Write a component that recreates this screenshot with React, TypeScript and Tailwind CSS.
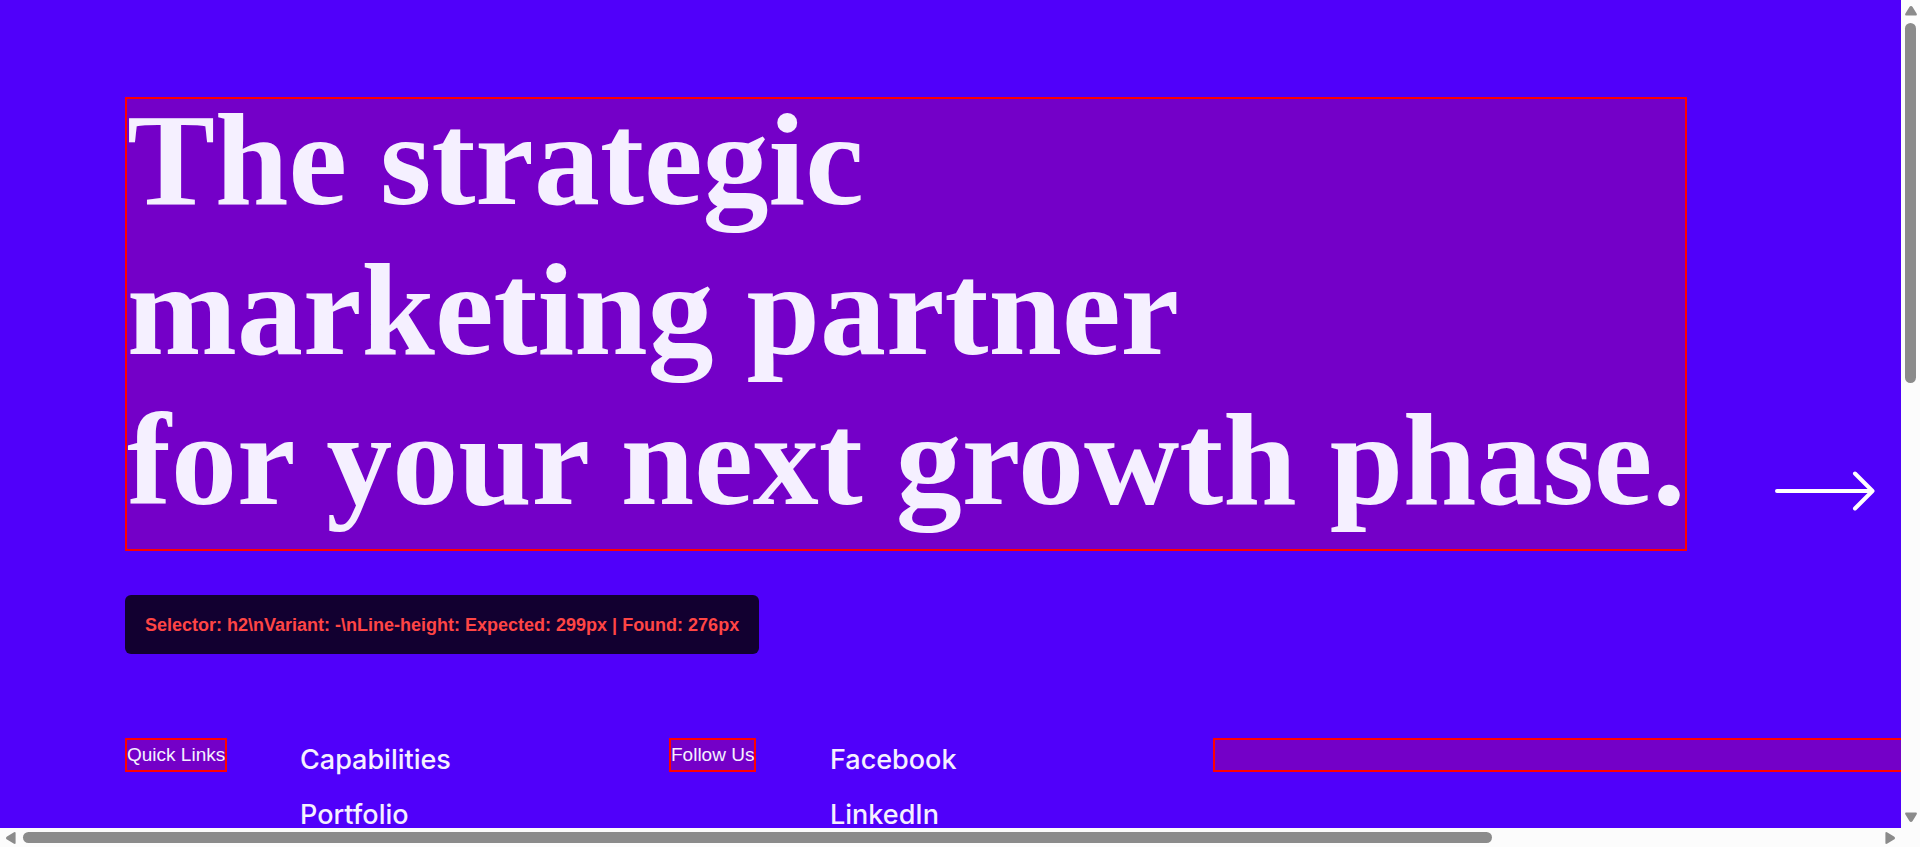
import type { ReactNode } from 'react';

const groups = [
  {
    label: 'Quick Links',
    columns: 'grid-cols-[175px_1fr]',
    links: ['Capabilities', 'Portfolio'],
  },
  {
    label: 'Follow Us',
    columns: 'grid-cols-[161px_1fr]',
    links: ['Facebook', 'LinkedIn'],
  },
];

function FlaggedLabel({ children }: { children?: ReactNode }) {
  return (
    <h3 className="h-[34px] w-fit whitespace-nowrap border-2 border-[#ff0000] bg-[#7400c8] font-['Liberation_Sans',sans-serif] text-[19px] leading-[30px]">
      {children}
    </h3>
  );
}

function LongArrow() {
  return (
    <svg
      width="100"
      height="40"
      viewBox="0 0 100 40"
      fill="none"
      stroke="#ffffff"
      strokeWidth="4"
      strokeLinecap="round"
      strokeLinejoin="round"
      aria-hidden="true"
    >
      <path d="M2 20H97M80 2.5L97.500 20L80 37.500" />
    </svg>
  );
}

function VerticalScrollbar() {
  return (
    <div className="flex w-[19px] shrink-0 flex-col items-center bg-[#fcfcfc] py-[6px]" aria-hidden="true">
      <svg width="12" height="10" viewBox="0 0 12 10" fill="#8b8b8b">
        <path d="M6 0Q7 0 7.6 1L11.6 7.6Q12.4 9.6 11 9.6H1Q-.4 9.6 .4 7.6L4.4 1Q5 0 6 0Z" />
      </svg>
      <div className="flex w-full grow flex-col items-center py-[7px]">
        <div className="h-[46%] w-[11px] rounded-full bg-[#8b8b8b]" />
      </div>
      <svg width="12" height="10" viewBox="0 0 12 10" fill="#8b8b8b">
        <path d="M6 10Q7 10 7.6 9L11.6 2.4Q12.4 .4 11 .4H1Q-.4 .4 .4 2.4L4.4 9Q5 10 6 10Z" />
      </svg>
    </div>
  );
}

function HorizontalScrollbar() {
  return (
    <div className="flex h-[19px] shrink-0 items-center bg-[#fcfcfc] pl-[6px] pr-[25px]" aria-hidden="true">
      <svg width="10" height="12" viewBox="0 0 10 12" fill="#8b8b8b">
        <path d="M0 6Q0 5 1 4.4L7.6 .4Q9.6 -.4 9.6 1V11Q9.6 12.4 7.6 11.6L1 7.6Q0 7 0 6Z" />
      </svg>
      <div className="grow px-[7px]">
        <div className="h-[11px] w-[79.2%] rounded-full bg-[#8b8b8b]" />
      </div>
      <svg width="10" height="12" viewBox="0 0 10 12" fill="#8b8b8b">
        <path d="M10 6Q10 5 9 4.4L2.4 .4Q.4 -.4 .4 1V11Q.4 12.4 2.4 11.6L9 7.6Q10 7 10 6Z" />
      </svg>
    </div>
  );
}

export default function App() {
  return (
    <div className="flex h-screen flex-col overflow-hidden bg-[#fcfcfc] font-['Inter','Liberation_Sans',sans-serif] text-[#f5f0ff]">
      <div className="flex min-h-0 grow">
        <main className="min-w-0 grow overflow-hidden bg-[#5000fa] pl-[125px] pt-[97px]">
          <section className="flex items-end gap-[88px]">
            <h2 className="w-[1562px] shrink-0 whitespace-nowrap border-2 border-[#ff0000] bg-[#7400c8] font-['Liberation_Serif',serif] text-[132px] font-bold leading-[150px]">
              <span className="-mt-3.5 mb-3.5 block">
                The strategic
                <br />
                marketing partner
                <br />
                for your next growth phase.
              </span>
            </h2>
            <a href="#contact" aria-label="Contact us" className="mb-10 shrink-0">
              <LongArrow />
            </a>
          </section>

          <p className="mt-11 flex h-[59px] w-fit items-center whitespace-nowrap rounded-md bg-[#120030] px-5 font-['Liberation_Sans',sans-serif] text-lg font-bold text-[#ff4545]">
            {'Selector: h2\\nVariant: -\\nLine-height: Expected: 299px | Found: 276px'}
          </p>

          <footer className="mt-[84px] grid grid-cols-[repeat(2,544px)_1088px]">
            {groups.map((group) => (
              <nav key={group.label} aria-label={group.label} className={`grid ${group.columns}`}>
                <FlaggedLabel>{group.label}</FlaggedLabel>
                <ul className="flex flex-col gap-[27px] pt-2 text-[27px] font-medium leading-7">
                  {group.links.map((link) => (
                    <li key={link}>
                      <a href={`#${link.toLowerCase()}`}>{link}</a>
                    </li>
                  ))}
                </ul>
              </nav>
            ))}
            <div className="h-[34px] border-2 border-[#ff0000] bg-[#7400c8]" />
          </footer>
        </main>
        <VerticalScrollbar />
      </div>
      <HorizontalScrollbar />
    </div>
  );
}
